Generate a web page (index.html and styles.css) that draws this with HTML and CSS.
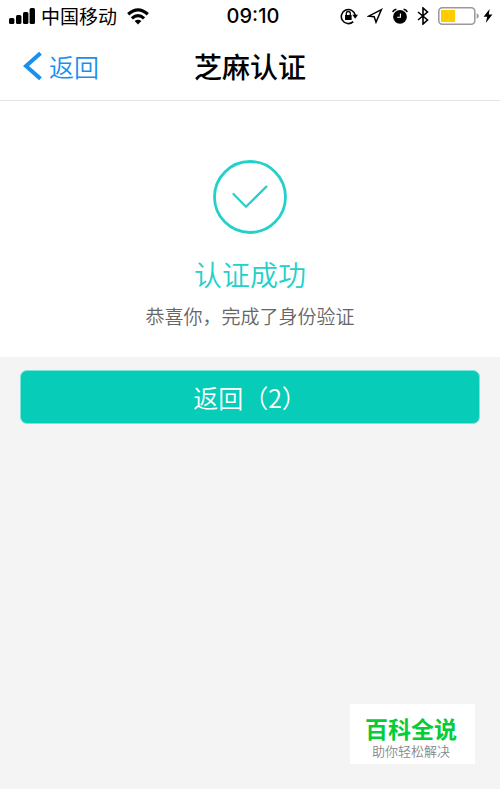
FILE: index.html
```html
<!DOCTYPE html>
<html lang="zh-CN">
<head>
<meta charset="utf-8">
<meta name="viewport" content="width=device-width, initial-scale=1">
<title>芝麻认证</title>
<link rel="stylesheet" href="styles.css">
</head>
<body>
<div class="status">
  <div class="status-left">
    <svg class="signal" width="26" height="16" viewBox="0 0 26 16" aria-hidden="true"><rect x="0" y="10" width="5.4" height="6" rx="1.5"/><rect x="7" y="7" width="5.4" height="9" rx="1.5"/><rect x="14" y="4" width="5.4" height="12" rx="1.5"/><rect x="20.6" y="0" width="5.4" height="16" rx="1.5"/></svg>
    <span class="carrier">中国移动</span>
    <svg class="wifi" width="22" height="17" viewBox="0 0 22 17" fill="none" stroke="#000" stroke-width="3.2" aria-hidden="true"><path d="M1.2 6.2Q11-2.6 20.8 6.2"/><path d="M4.9 10.4Q11 5 17.1 10.4"/><path d="M7.6 12.9Q11 10.4 14.4 12.9L11 16.4Z" fill="#000" stroke="none"/></svg>
  </div>
  <time class="clock">09:10</time>
  <div class="status-right">
    <svg width="18" height="18" viewBox="0 0 18 18" fill="none" stroke="#000" aria-hidden="true"><path d="M13.2 14.6A7 7 0 1 1 15.2 8.2" stroke-width="1.6"/><path d="M12.3 7.8H18L15.2 11.8Z" fill="#000" stroke="none"/><rect x="5" y="8" width="6.6" height="5" fill="#000" stroke="none"/><path d="M6.3 8.5V6.5a2 2 0 0 1 4 0V8.5" stroke-width="1.3"/></svg>
    <svg width="16" height="16" viewBox="0 0 16 16" fill="none" stroke="#000" stroke-width="1.5" aria-hidden="true"><path d="M14.4 1.6 1.6 8.2 7.2 8.8 9 14.2Z"/></svg>
    <svg width="16" height="16" viewBox="0 0 16 16" aria-hidden="true"><circle cx="8" cy="8.8" r="6.9"/><path d="M.9 4.2Q1.4 1.6 4.4 1.2M15.1 4.2Q14.6 1.6 11.6 1.2" fill="none" stroke="#000" stroke-width="1.6"/><path d="M8.4 5.4V9.3H5.2" fill="none" stroke="#fff" stroke-width="1.1"/></svg>
    <svg width="12" height="18" viewBox="0 0 12 18" fill="none" stroke="#000" stroke-width="1.6" aria-hidden="true"><path d="M1 5 10.5 13 6 17V1L10.5 5 1 13"/></svg>
    <div class="power">
      <svg width="41" height="18" viewBox="0 0 41 18" aria-hidden="true"><rect x=".8" y=".8" width="36" height="16.4" rx="3.5" fill="#fff" stroke="#999" stroke-width="1.5"/><rect x="3" y="3" width="14" height="12" fill="#fc0"/><path d="M38.6 6.2Q40.8 7 40.8 9T38.6 11.8Z" fill="#999"/></svg>
      <svg width="10" height="14" viewBox="0 0 10 14" aria-hidden="true"><path d="M6.6 0 .6 7.8H4.2L2.8 14 9.4 5.6H5.8Z"/></svg>
    </div>
  </div>
</div>
<header class="nav">
  <a class="back" href="#"><svg width="19" height="28" viewBox="0 0 19 28" fill="none" stroke="#1890ee" stroke-width="4" aria-hidden="true"><path d="M17.5 1.2 3 14 17.5 26.8"/></svg>返回</a>
  <h1 class="title">芝麻认证</h1>
</header>
<main>
  <section class="result">
    <svg class="check" width="74" height="74" viewBox="0 0 74 74" fill="none" stroke="#23d0ca" aria-hidden="true"><circle cx="37" cy="37" r="35.5" stroke-width="2.8"/><path d="M20.5 34 33 46.8 53.4 26.6" stroke-width="2.2" stroke-linecap="round"/></svg>
    <h2 class="heading">认证成功</h2>
    <p class="message">恭喜你，完成了身份验证</p>
  </section>
  <div class="actions"><button class="return" type="button">返回（2）</button></div>
</main>
<aside class="badge">
  <strong class="badge-name">百科全说</strong>
  <span class="badge-text">助你轻松解决</span>
</aside>
</body>
</html>
```
FILE: styles.css
```css
* { box-sizing: border-box; }
body {
  margin: 0;
  min-height: 100vh;
  background: #f4f4f4;
  color: #000;
  font-family: "Noto Sans CJK SC", sans-serif;
}
svg { display: block; flex: none; }
.status, .nav {
  display: grid;
  grid-template-columns: 1fr auto 1fr;
  align-items: center;
  background: #fff;
}
.status { height: 32px; padding: 0 7px 0 9px; }
.status-left, .status-right, .power { display: flex; align-items: center; }
.status-left { gap: 6px; }
.status-right { gap: 9px; justify-content: flex-end; }
.power { gap: 4px; }
.carrier { font-size: 19px; line-height: 28px; }
.wifi { margin-left: 4px; }
.clock { padding-left: 4px; font: 500 20px/32px Inter, sans-serif; }
.nav {
  height: 69px;
  padding: 0 23px 1px;
  border-bottom: 1px solid #e5e5e5;
}
.back {
  display: flex;
  align-items: center;
  gap: 7px;
  color: #1890ee;
  font-size: 25px;
  font-weight: 350;
  line-height: 36px;
  text-decoration: none;
}
.title { margin: 0; font-size: 28px; font-weight: 500; line-height: 40px; }
.result {
  display: flex;
  flex-direction: column;
  align-items: center;
  padding: 59px 20px 27px;
  background: #fff;
  text-align: center;
}
.heading {
  margin: 20px 0 8px;
  color: #23d0ca;
  font-size: 28px;
  font-weight: 350;
  line-height: 40px;
}
.message { margin: 0; color: #666; font-size: 19px; font-weight: 350; line-height: 28px; }
.actions { padding: 13px 20px; }
.return {
  display: block;
  width: 100%;
  height: 54px;
  padding: 0;
  border: 1px solid #7ce3d8;
  border-radius: 7px;
  background: #06ccb8;
  color: #fff;
  font: 350 25px/36px "Noto Sans CJK SC", sans-serif;
}
.badge {
  position: fixed;
  right: 25px;
  bottom: 25px;
  display: flex;
  flex-direction: column;
  align-items: center;
  padding: 10px 18px 5px 15px;
  background: #fff;
}
.badge-name { color: #05cc38; font-size: 23px; font-weight: 700; line-height: 28px; }
.badge-text { color: #888; font-size: 13px; font-weight: 350; line-height: 17px; }
```
